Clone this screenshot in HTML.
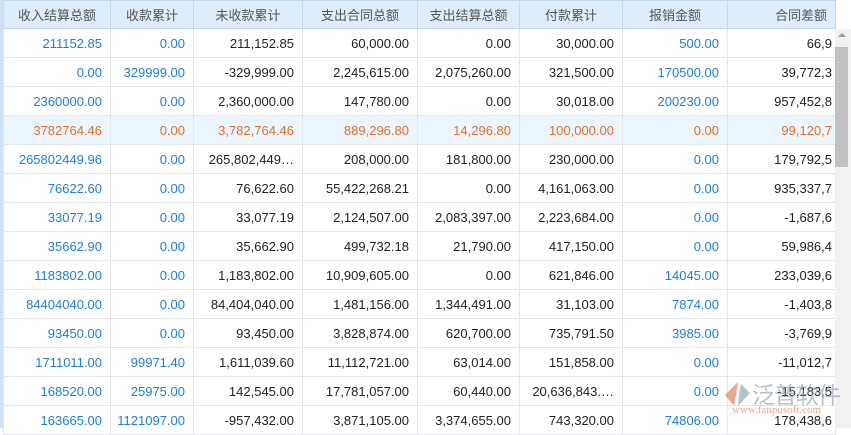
<!DOCTYPE html><html><head><meta charset="utf-8"><style>
body{margin:0;width:851px;height:428px;overflow:hidden;background:#fff;font-family:"Liberation Sans","Noto Sans CJK SC",sans-serif;font-size:13px;position:relative}
table{position:absolute;left:3px;top:0;border-collapse:collapse;table-layout:fixed;width:832px}
td,th{height:28px;border:1px solid #e2e6ea;padding:0 8px 0 0;text-align:right;white-space:nowrap;overflow:hidden;color:#222}
th{background:#deedfb;color:#555;font-weight:normal;text-align:center;padding:0;border-color:#c5d9ee;height:27px}
td.b{color:#1e7fe0}
tr.h td{background:#eaf5fe;color:#e0732c}
td.l{padding-right:3px}
#sb{position:absolute;left:835px;top:29px;width:16px;height:399px;background:#f1f1f1}
#th{position:absolute;left:835px;top:47px;width:13px;height:120px;background:#c1c1c1}
#lb{position:absolute;left:0;top:0;width:3px;height:428px;background:#cfe2f5}
</style></head><body>
<div id="lb"></div>
<table>
<colgroup><col style="width:107px"><col style="width:83px"><col style="width:109px"><col style="width:115px"><col style="width:102px"><col style="width:103px"><col style="width:105px"><col style="width:108px"></colgroup>
<tr><th>收入结算总额</th><th>收款累计</th><th>未收款累计</th><th>支出合同总额</th><th>支出结算总额</th><th>付款累计</th><th>报销金额</th><th style="text-align:right;padding-right:8px">合同差额</th></tr>
<tr><td class="b">211152.85</td><td class="b">0.00</td><td>211,152.85</td><td>60,000.00</td><td>0.00</td><td>30,000.00</td><td class="b">500.00</td><td class="l">66,9</td></tr>
<tr><td class="b">0.00</td><td class="b">329999.00</td><td>-329,999.00</td><td>2,245,615.00</td><td>2,075,260.00</td><td>321,500.00</td><td class="b">170500.00</td><td class="l">39,772,3</td></tr>
<tr><td class="b">2360000.00</td><td class="b">0.00</td><td>2,360,000.00</td><td>147,780.00</td><td>0.00</td><td>30,018.00</td><td class="b">200230.00</td><td class="l">957,452,8</td></tr>
<tr class="h"><td>3782764.46</td><td>0.00</td><td>3,782,764.46</td><td>889,296.80</td><td>14,296.80</td><td>100,000.00</td><td>0.00</td><td class="l">99,120,7</td></tr>
<tr><td class="b">265802449.96</td><td class="b">0.00</td><td>265,802,449…</td><td>208,000.00</td><td>181,800.00</td><td>230,000.00</td><td class="b">0.00</td><td class="l">179,792,5</td></tr>
<tr><td class="b">76622.60</td><td class="b">0.00</td><td>76,622.60</td><td>55,422,268.21</td><td>0.00</td><td>4,161,063.00</td><td class="b">0.00</td><td class="l">935,337,7</td></tr>
<tr><td class="b">33077.19</td><td class="b">0.00</td><td>33,077.19</td><td>2,124,507.00</td><td>2,083,397.00</td><td>2,223,684.00</td><td class="b">0.00</td><td class="l">-1,687,6</td></tr>
<tr><td class="b">35662.90</td><td class="b">0.00</td><td>35,662.90</td><td>499,732.18</td><td>21,790.00</td><td>417,150.00</td><td class="b">0.00</td><td class="l">59,986,4</td></tr>
<tr><td class="b">1183802.00</td><td class="b">0.00</td><td>1,183,802.00</td><td>10,909,605.00</td><td>0.00</td><td>621,846.00</td><td class="b">14045.00</td><td class="l">233,039,6</td></tr>
<tr><td class="b">84404040.00</td><td class="b">0.00</td><td>84,404,040.00</td><td>1,481,156.00</td><td>1,344,491.00</td><td>31,103.00</td><td class="b">7874.00</td><td class="l">-1,403,8</td></tr>
<tr><td class="b">93450.00</td><td class="b">0.00</td><td>93,450.00</td><td>3,828,874.00</td><td>620,700.00</td><td>735,791.50</td><td class="b">3985.00</td><td class="l">-3,769,9</td></tr>
<tr><td class="b">1711011.00</td><td class="b">99971.40</td><td>1,611,039.60</td><td>11,112,721.00</td><td>63,014.00</td><td>151,858.00</td><td class="b">0.00</td><td class="l">-11,012,7</td></tr>
<tr><td class="b">168520.00</td><td class="b">25975.00</td><td>142,545.00</td><td>17,781,057.00</td><td>60,440.00</td><td>20,636,843.…</td><td class="b">0.00</td><td class="l">-15,183,5</td></tr>
<tr><td class="b">163665.00</td><td class="b">1121097.00</td><td>-957,432.00</td><td>3,871,105.00</td><td>3,374,655.00</td><td>743,320.00</td><td class="b">74806.00</td><td class="l">178,438,6</td></tr>
</table>
<div id="sb"></div><div id="th"></div>
<div style="position:absolute;left:838px;top:33px;width:0;height:0;border-left:4px solid transparent;border-right:4px solid transparent;border-bottom:4px solid #999"></div>
<div style="position:absolute;left:722px;top:380px;opacity:.6">
<svg width="30" height="28" style="position:absolute;left:0;top:0"><path d="M16 2 L3 15 L12 26 L14 15 Z" fill="#e07040"/><path d="M19 4 L28 13 L16 26 L17 14 Z" fill="#8a9aaa"/></svg>
<span style="position:absolute;left:30px;top:-4px;font-size:23px;color:#8a97a6;white-space:nowrap;letter-spacing:-1px">泛普软件</span>
<span style="position:absolute;left:10px;top:24px;font-size:11px;font-family:'Liberation Serif',serif;color:#e07040;white-space:nowrap">www.fanpusoft.com</span>
</div>
</body></html>
